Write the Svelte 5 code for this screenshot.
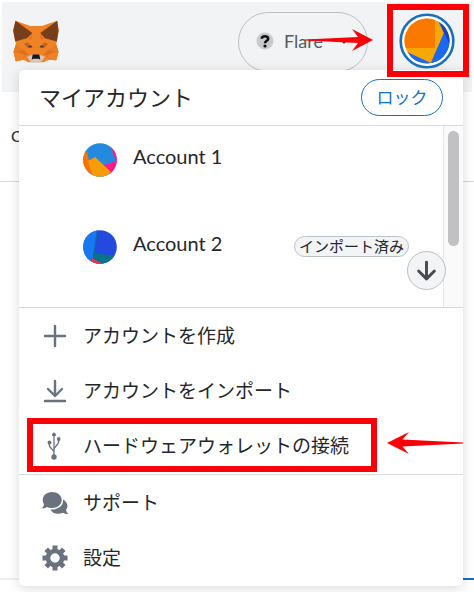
<script>
  const accounts = [
    { name: 'Account 1', imported: false },
    { name: 'Account 2', imported: true },
  ];
</script>

<div class="page">
  <header>
    <svg class="fox" viewBox="40 58 138 130" role="img" aria-label="MetaMask">
      <path fill="#f08227" d="M47 60 92 76H126L173 60 178 90 172 122 170 132 177 154 170 180 148 178 132 186H86L70 178 48 183 41 154 48 132 47 122 40 90Z" />
      <path fill="#e8731c" d="M92 76 98 98 84 116H134L122 98 126 76Z" />
      <path fill="#f08227" d="M92 76H126L122 100 118 150H100L96 100Z" />
      <path fill="#ea7a20" d="M41 154 48 132 72 148 80 164 70 178 48 183Z M177 154 170 132 146 148 138 164 148 178 170 180Z" />
      <path fill="#dd6f1e" d="M52 152 74 150 86 162 72 164Z M166 152 144 150 132 162 146 164Z" />
      <path fill="#f08227" d="M41 154 72 164 70 178 48 183Z M177 154 146 164 148 178 170 180Z" />
      <path fill="#763e1a" d="M47 60 98 97 81 113 46 123 40 90Z M173 60 122 97 136 113 172 123 177 90Z" />
      <path fill="#cd6116" d="M72 130 84 126 98 140 84 142Z M146 130 134 126 120 140 134 142Z" />
      <path fill="#4a3a35" d="M83 137 94 135 98 141 88 141Z M135 137 124 135 120 141 130 141Z" />
      <path fill="#d5c8c0" d="M82 170 97 163H121L136 170 127 182 118 187H98L91 182Z" />
      <path fill="#161616" d="M99 162H119L122 178 117 175H101L96 178Z" />
    </svg>
    <button class="network" type="button">
      <svg class="unknown" viewBox="0 0 18 18" aria-hidden="true">
        <circle cx="9" cy="9" r="8.5" fill="#c9cacc" />
        <path fill="none" stroke="#111" stroke-width="2.6" d="M5.8 6.8C5.8 3.4 12.2 3.4 12.2 6.7 12.2 8.8 9 8.8 9 11.2" />
        <circle cx="9" cy="14" r="1.6" fill="#111" />
      </svg>
      <span>Flare</span>
      <svg class="caret" viewBox="0 0 12 8" aria-hidden="true"><path fill="none" stroke="#24272a" stroke-width="2.5" d="m3 2 3 3 3-3" /></svg>
    </button>
    <button class="identity" type="button" aria-label="マイアカウント">
      <svg viewBox="0 0 56 56" aria-hidden="true">
        <clipPath id="me"><circle cx="28" cy="28" r="22.5" /></clipPath>
        <circle cx="28" cy="28" r="26.3" fill="#fff" stroke="#1670bf" stroke-width="2.6" />
        <g clip-path="url(#me)">
          <path fill="#f9a803" d="M0 0H56V56H0Z" />
          <path fill="#fa7900" d="M0 0H36V35H0Z" />
          <path fill="#1a6af0" d="M38 6 45 20 32 50 8 39V56H56V0Z" />
          <path fill="#1f3fc4" d="M39 4 45 20 50 32 56 20 46 4Z" />
          <path fill="#1a6af0" d="M45 20 50 30 52 56H32V50Z" />
        </g>
      </svg>
    </button>
    <svg class="pointer top" viewBox="0 0 68 22" aria-hidden="true"><path fill="#fb0007" d="M68 11 47 0 53 8 0 10.500V11.500L53 14 47 22Z" /></svg>
  </header>

  <main>
    <p class="tab">C</p>
    <hr class="rule" />
    <hr class="active" />
  </main>

  <section class="menu">
    <div class="title">
      <h1>マイアカウント</h1>
      <button class="lock" type="button">ロック</button>
    </div>

    <div class="accounts">
      <div class="list">
        {#each accounts as account, i}
          <button class="account" type="button">
            <svg class="orb" viewBox="0 0 34 34" aria-hidden="true">
              <clipPath id="orb{i}"><circle cx="17" cy="17" r="16.8" /></clipPath>
              <g clip-path="url(#orb{i})">
                {#if i === 0}
                  <path fill="#238ae0" d="M0 0H34V34H0Z" />
                  <path fill="#ff1a87" d="M27 2 33 18 21 22 28 34H34V0Z" />
                  <path fill="#fa7300" d="M0 7 4 9 10 34H0Z" />
                  <path fill="#f99b04" d="M5 18 12 14 28 29 22 34H10Z" />
                {:else}
                  <path fill="#2349df" d="M0 0H34V34H0Z" />
                  <path fill="#1877f2" d="M0 0H14L10 28 8 34H0Z" />
                  <path fill="#05748a" d="M11 23 34 26V34H8Z" />
                  <path fill="#f03048" d="M9 28 20 34H8Z" />
                  <path stroke="#05748a" d="M14.500 0 11 24" />
                {/if}
              </g>
            </svg>
            <span class="name">{account.name}</span>
            {#if account.imported}<span class="badge">インポート済み</span>{/if}
          </button>
        {/each}
      </div>
      <div class="track"><div class="thumb"></div></div>
      <button class="down" type="button" aria-label="下にスクロール">
        <svg viewBox="0 0 20 20" aria-hidden="true"><path fill="none" stroke="#484b50" stroke-width="2.8" stroke-linecap="round" stroke-linejoin="round" d="M10 2V18M2.500 10.500 10 18 17.500 10.500" /></svg>
      </button>
    </div>

    <nav class="group">
      <button class="item" type="button">
        <svg viewBox="0 0 28 28" aria-hidden="true"><path stroke="#6a737d" stroke-width="2.400" stroke-linecap="round" d="M14 4V24M4 14H24" /></svg>
        <span>アカウントを作成</span>
      </button>
      <button class="item" type="button">
        <svg viewBox="0 0 28 28" aria-hidden="true"><path fill="none" stroke="#6a737d" stroke-width="2.400" stroke-linecap="round" stroke-linejoin="round" d="M14 4V18.500M7 12 14 19 21 12M4 24H24" /></svg>
        <span>アカウントをインポート</span>
      </button>
      <button class="item marked" type="button">
        <svg viewBox="0 0 28 28" aria-hidden="true">
          <path fill="none" stroke="#6a737d" stroke-width="1.300" d="M13 3V25M13 21C13 16 8 18 8 11M13 18C13 13 18 15 18 7" />
          <path fill="#6a737d" d="M13 0 15 4H11Z" />
          <circle cx="13" cy="2.500" r="1.800" fill="#6a737d" /><circle cx="13" cy="25" r="2.700" fill="#6a737d" />
          <circle cx="8.500" cy="10.500" r="1.900" fill="#6a737d" /><circle cx="17.700" cy="7" r="1.900" fill="#6a737d" />
        </svg>
        <span>ハードウェアウォレットの接続</span>
      </button>
      <svg class="pointer side" viewBox="0 0 76 22" aria-hidden="true"><path fill="#fb0007" d="M0 11 22 0 15.500 7.500 76 10.500V11.500L15.500 14.500 22 22Z" /></svg>
    </nav>

    <nav class="group">
      <button class="item" type="button">
        <svg viewBox="0 0 28 28" aria-hidden="true">
          <path fill="#6a737d" d="M22 10.500C26 12.500 28 17 25 21 25 22.500 26.500 24 27.500 25 25.500 25.300 23.500 24.500 22 23.700 17 26 11 24.500 9.500 20.500 17 21 23 16.500 22 10.500Z" />
          <path fill="#6a737d" d="M11 3C16.500 3 20.700 6.500 20.700 11S16.500 19 11 19C9 19 7.500 18.600 6.200 17.900 4.500 19 2.500 19.600.8 19.300 2 18 2.800 16.800 3 15.500-.5 9.500 3.500 3 11 3Z" />
        </svg>
        <span>サポート</span>
      </button>
      <button class="item" type="button">
        <svg viewBox="0 0 28 28" aria-hidden="true">
          <path fill="none" stroke="#6a737d" stroke-width="5" stroke-linecap="butt" d="M14 1.500V6M14 22V26.500M1.500 14H6M22 14H26.500M5.200 5.200 8.400 8.400M19.600 19.600 22.800 22.800M5.200 22.800 8.400 19.600M19.600 8.400 22.800 5.200" />
          <circle cx="14" cy="14" r="7" fill="none" stroke="#6a737d" stroke-width="4.600" />
        </svg>
        <span>設定</span>
      </button>
    </nav>
  </section>
</div>

<style>
  :global(body) { margin: 0; background: #fff; }
  .page {
    position: relative;
    box-sizing: border-box;
    min-height: 592px;
    padding: 2px 2px 0;
    overflow: hidden;
    color: #24272a;
    font-family: Lato, "Noto Sans CJK JP", sans-serif;
  }
  button { font: inherit; color: inherit; cursor: pointer; }
  svg { display: block; flex: none; }
  h1, p { margin: 0; font-weight: 400; }
  header {
    position: relative;
    display: flex;
    align-items: flex-start;
    height: 90px;
    padding: 2px 3px 0 11px;
    box-sizing: border-box;
    background: #f2f3f5;
  }
  .fox { width: 46px; height: 43px; margin-top: 16px; }
  .network {
    display: flex;
    align-items: center;
    box-sizing: border-box;
    width: 130px;
    height: 60px;
    margin: 8px 19px 0 auto;
    padding: 0 17px 2px;
    border: 1px solid #bbc0c5;
    border-radius: 30px;
    background: none;
    font-size: 18px;
    color: #535a61;
  }
  .unknown { width: 18px; height: 18px; margin-right: 10px; }
  .caret { width: 12px; height: 8px; margin-left: auto; }
  .identity {
    box-sizing: border-box;
    width: 82px;
    height: 73px;
    padding: 3px 6px;
    border: 6px solid #fb0007;
    background: none;
    position: relative;
    z-index: 2;
  }
  .identity svg { width: 56px; height: 56px; }
  .pointer { position: absolute; }
  .top { width: 68px; height: 22px; top: 27px; right: 99px; }
  .tab { padding: 34px 0 0 9px; font-size: 16px; line-height: 20px; }
  hr { margin: 0 -2px; border: 0; }
  .rule { height: 1px; margin-top: 35px; background: #d6d9dc; }
  .active { height: 2px; margin-top: 396px; background: linear-gradient(90deg, #eceef0 50%, #1670bf 50%); }
  .menu {
    position: absolute;
    top: 70px;
    left: 19px;
    right: 11px;
    border-radius: 5px;
    background: #fff;
    box-shadow: 0 2px 12px #00000026;
  }
  .title {
    display: flex;
    align-items: center;
    justify-content: space-between;
    height: 55px;
    padding: 0 20px;
    border-bottom: 1px solid #d6d9dc;
  }
  h1 { padding-bottom: 4px; font-size: 22px; }
  .lock {
    width: 82px;
    height: 37px;
    padding: 0 0 2px;
    border: 1px solid #1670bf;
    border-radius: 19px;
    background: #fff;
    color: #1670bf;
    font-size: 17px;
  }
  .accounts { position: relative; display: flex; height: 181px; border-bottom: 1px solid #d6d9dc; }
  .list { flex: 1; }
  .account {
    display: flex;
    align-items: center;
    width: 100%;
    height: 87px;
    padding: 0 34px 20px 64px;
    border: 0;
    background: none;
  }
  .orb { width: 34px; height: 34px; }
  .name { flex: 1; margin: 0 0 8px 16px; font-size: 20px; text-align: left; }
  .badge {
    padding: 0 4px;
    border: 1px solid #bbc0c5;
    border-radius: 11px;
    background: #f2f4f6;
    font-size: 15px;
    line-height: 19px;
  }
  .track { width: 20px; box-sizing: border-box; padding: 5px 4px; border-left: 1px solid #e5e6e8; background: #fafafa; }
  .thumb { height: 115px; border-radius: 6px; background: #c1c1c3; }
  .down {
    position: absolute;
    right: 17px;
    bottom: 17px;
    display: grid;
    place-items: center;
    width: 39px;
    height: 39px;
    padding: 0;
    border: 1px solid #bbc0c5;
    border-radius: 50%;
    background: #f2f4f6;
  }
  .down svg { width: 21px; height: 21px; }
  .group { position: relative; padding-bottom: 1px; }
  .group + .group { border-top: 1px solid #d6d9dc; }
  .item {
    position: relative;
    display: flex;
    align-items: center;
    gap: 14px;
    width: 100%;
    height: 55px;
    padding: 0 22px;
    border: 0;
    background: none;
    font-size: 19px;
    text-align: left;
  }
  .item svg { width: 28px; height: 28px; }
  .item span { padding-bottom: 3px; }
  .marked::after {
    content: "";
    position: absolute;
    top: 0;
    left: 8px;
    right: 86px;
    bottom: 1px;
    border: 6px solid #fb0007;
  }
  .side { width: 76px; height: 22px; right: 0; bottom: 20px; }
</style>
